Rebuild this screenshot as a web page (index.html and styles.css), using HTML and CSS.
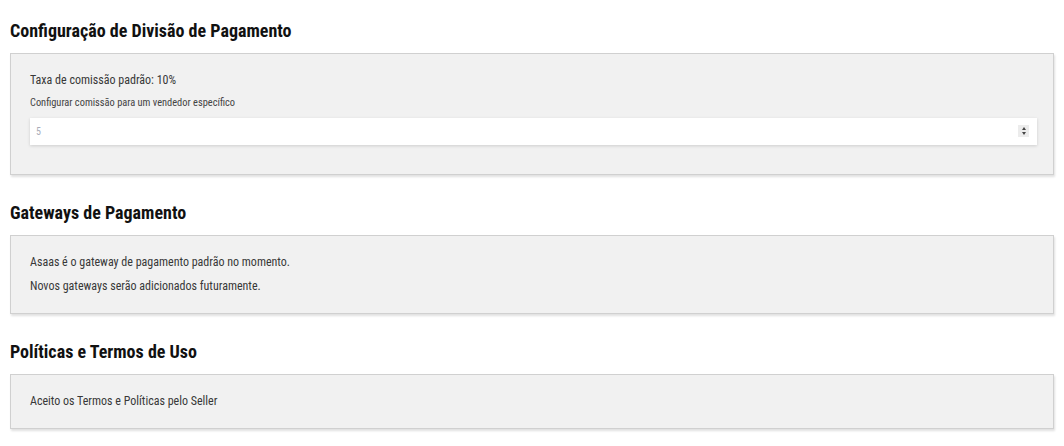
FILE: index.html
```html
<!DOCTYPE html>
<html lang="pt-BR">
<head>
<meta charset="utf-8">
<title>Configurações</title>
<link rel="stylesheet" href="styles.css">
</head>
<body>
<main class="page">
  <section class="section">
    <h2 class="section-title">Configuração de Divisão de Pagamento</h2>
    <div class="card">
      <p class="text">Taxa de comissão padrão: 10%</p>
      <label class="label" for="commission">Configurar comissão para um vendedor específico</label>
      <div class="field">
        <input class="input" id="commission" type="number" placeholder="5">
        <span class="spinner" aria-hidden="true"><i class="up"></i><i class="down"></i></span>
      </div>
    </div>
  </section>
  <section class="section">
    <h2 class="section-title">Gateways de Pagamento</h2>
    <div class="card">
      <p class="text">Asaas é o gateway de pagamento padrão no momento.</p>
      <p class="text">Novos gateways serão adicionados futuramente.</p>
    </div>
  </section>
  <section class="section">
    <h2 class="section-title">Políticas e Termos de Uso</h2>
    <div class="card">
      <p class="text">Aceito os Termos e Políticas pelo Seller</p>
    </div>
  </section>
</main>
</body>
</html>
```
FILE: styles.css
```css
* { box-sizing: border-box; }
html, body { margin: 0; padding: 0; background: #fff; }
body {
  font-family: Roboto, "Liberation Sans", sans-serif;
  font-stretch: 75%;
  color: #333;
}
.page {
  padding: 21px 10px 10px;
  display: flex;
  flex-direction: column;
  gap: 28px;
}
.section-title {
  margin: 0 0 12px;
  font-size: 18px;
  line-height: 20px;
  font-weight: 700;
  color: #111;
}
.card {
  background: #f1f1f1;
  border: 1px solid #d0d0d0;
  box-shadow: 1px 2px 2px rgba(0,0,0,0.12);
  padding: 19px 19px 19px;
  display: flex;
  flex-direction: column;
}
.text {
  margin: 0;
  font-size: 12px;
  line-height: 15px;
  color: #383838;
}
.text + .text { margin-top: 9px; }
.label {
  margin-top: 8px;
  font-size: 10.4px;
  line-height: 14px;
  color: #444;
}
.field {
  position: relative;
  margin: 8px 0 10px;
  width: 1007px;
}
.input {
  display: block;
  width: 100%;
  height: 27px;
  border: none;
  background: #fff;
  padding: 0 6px;
  font-family: Roboto, "Liberation Sans", sans-serif;
  font-stretch: 75%;
  font-size: 10px;
  box-shadow: 0 1px 3px rgba(0,0,0,0.15);
  outline: none;
  -moz-appearance: textfield;
}
.input::-webkit-inner-spin-button,
.input::-webkit-outer-spin-button { -webkit-appearance: none; margin: 0; }
.input::placeholder { color: #a8acb8; }
.spinner {
  position: absolute;
  right: 8px;
  top: 7px;
  width: 11px;
  height: 12px;
  background: #ececec;
  display: flex;
  flex-direction: column;
  align-items: center;
  justify-content: center;
  gap: 2px;
}
.spinner i {
  display: block;
  width: 0;
  height: 0;
  border-left: 2.5px solid transparent;
  border-right: 2.5px solid transparent;
}
.spinner .up { border-bottom: 3px solid #444; }
.spinner .down { border-top: 3px solid #444; }
```
